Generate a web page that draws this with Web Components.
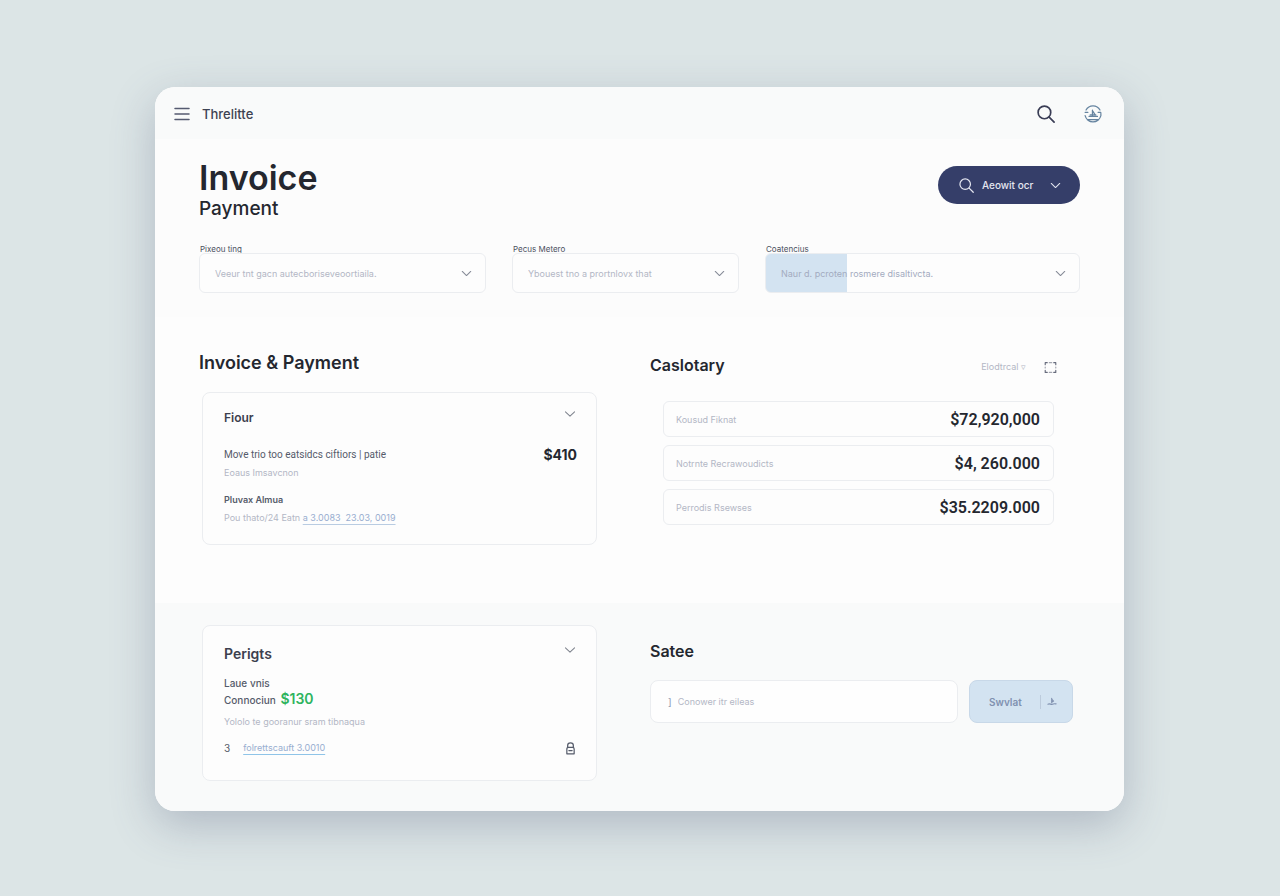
<!DOCTYPE html>
<html lang="en">
<head>
<meta charset="utf-8">
<meta name="viewport" content="width=device-width, initial-scale=1">
<title>Invoice Payment</title>
<style>
    :root {
        --ink: #24272f;
        --text: #555b6a;
        --muted: #b3b7c5;
        --line: #ebedf0;
        --surface: #fdfdfd;
        --surface-alt: #f9fafa;
        --navy: #353e69;
        --sky: #d3e3f1;
        --link: #98aed0;
        --green: #2fb45f;
        --narrow: Roboto, "Liberation Sans", sans-serif;
    }
    * { box-sizing: border-box; }
    body {
        margin: 0;
        min-height: 100vh;
        padding: 87px 156px 85px 155px;
        display: flex;
        background: #dce5e6;
        color: var(--ink);
        font-family: Inter, "Liberation Sans", sans-serif;
        font-size: 10px;
    }
</style>
</head>
<body>
<app-window>
    <top-bar slot="bar" brand="Threlitte"></top-bar>

    <page-hero heading="Invoice" sub="Payment" action="Aeowit ocr">
        <select-field label="Pixeou ting" value="Veeur tnt gacn autecboriseveoortiaila."></select-field>
        <select-field label="Pecus Metero" value="Ybouest tno a prortnlovx that"></select-field>
        <select-field label="Coatencius" value="Naur d. pcroten rosmere disaltivcta." marked></select-field>
    </page-hero>

    <split-section>
        <invoice-panel slot="left"></invoice-panel>
        <totals-panel slot="right"></totals-panel>
    </split-section>

    <split-section alt>
        <payment-panel slot="left"></payment-panel>
        <search-panel slot="right"></search-panel>
    </split-section>
</app-window>

<script>
const ICONS = {
    menu: '<path d="M1 2.500h14M1 8h14M1 13.500h14"/>',
    search: '<circle cx="6.600" cy="6.600" r="5.600"/><path d="M10.800 10.800 15.200 15.200"/>',
    chevron: '<path d="M2.800 5.500 8 10.500l5.200-5"/>',
    account: '<path d="M1.800 4.500A7 7 0 0 1 14.200 4.500M15 7.500v2M1 9.500a7.200 7.200 0 0 0 14 0M3 13h10"/><path d="M7.500 4.500v4.500M7.800 5.500l2 3M4.500 10.200h7.500M5.500 8.800h5M1 6.500h2.500M12.500 6.500h2.500"/>',
    frame: '<path d="M1.500 4.500V2H4M12 2h2.500v2.500M1.500 11.500V14H4M12 14h2.500v-2.500"/><path d="M6.500 2h3M6.500 14h3M1.500 7.500v1M14.500 7.500v1" opacity=".6"/>',
    lock: '<path d="M4.500 6.500V4.200a3.500 3 0 0 1 7 0v2.300M3.500 14.500V8.500a2 2 0 0 1 2-2h5a2 2 0 0 1 2 2v6zM6 10.500h4"/>',
    pin: '<path d="M7.500 2v7M7.500 3.500l3 3-3 2M1.500 11.500c3-1.500 5 1 7 0s3.500-1 6-.500"/>'
};

// small helper shared by all elements
function mount(el, html) {
    const root = el.attachShadow({ mode: 'open' });
    root.innerHTML = `<style>* { box-sizing: border-box; margin: 0; } button, input, select { font: inherit; color: inherit; }</style>${html}`;
    return root;
}

class AppIcon extends HTMLElement {
    connectedCallback() {
        const size = this.getAttribute('size') || 16;
        const weight = this.getAttribute('weight') || 1.5;
        mount(this, `
            <style>
                :host { display: inline-flex; flex: none; }
                svg { display: block; fill: none; stroke: currentColor; stroke-linecap: round; stroke-linejoin: round; }
            </style>
            <svg width="${size}" height="${size}" viewBox="0 0 16 16" stroke-width="${weight}" aria-hidden="true">${ICONS[this.getAttribute('name')]}</svg>
        `);
    }
}

class AppWindow extends HTMLElement {
    connectedCallback() {
        mount(this, `
            <style>
                :host {
                    flex: 1; display: flex; flex-direction: column; overflow: hidden;
                    border-radius: 20px; background: var(--surface);
                    box-shadow: 0 14px 44px rgba(85, 92, 125, .32);
                }
            </style>
            <slot name="bar"></slot>
            <slot></slot>
        `);
    }
}

class TopBar extends HTMLElement {
    connectedCallback() {
        mount(this, `
            <style>
                :host { display: block; background: var(--surface-alt); }
                header { display: flex; align-items: center; height: 52px; padding: 2px 22px 0 19px; }
                button { display: flex; padding: 0; border: 0; background: none; cursor: pointer; }
                .menu { color: #555a70; margin-right: 12px; }
                .brand { flex: 1; font-size: 13px; font-weight: 500; color: #3d4252; }
                .search { color: #3a3d55; margin-right: 29px; }
                .account { color: #6684a0; }
            </style>
            <header>
                <button class="menu" aria-label="Menu"><app-icon name="menu" size="16"></app-icon></button>
                <span class="brand">${this.getAttribute('brand')}</span>
                <button class="search" aria-label="Search"><app-icon name="search" size="18"></app-icon></button>
                <button class="account" aria-label="Account"><app-icon name="account" size="18" weight="1.1"></app-icon></button>
            </header>
        `);
    }
}

class PageHero extends HTMLElement {
    connectedCallback() {
        mount(this, `
            <style>
                :host { display: block; padding: 20px 44px 24px; background: #fcfcfc; }
                .head { display: flex; justify-content: space-between; align-items: flex-start; }
                h1 { font-size: 34px; line-height: 38px; font-weight: 600; }
                p { font-size: 19px; line-height: 24px; font-weight: 500; }
                button {
                    display: flex; align-items: center; width: 142px; height: 38px; margin-top: 7px; padding: 0 18px 0 21px;
                    border: 0; border-radius: 20px; background: var(--navy); color: #e4e6f0; cursor: pointer;
                }
                button span { flex: 1; padding-left: 8px; text-align: left; font-weight: 500; white-space: nowrap; }
                .fields { display: grid; grid-template-columns: 287fr 227fr 315fr; gap: 26px; margin-top: 24px; }
            </style>
            <div class="head">
                <div>
                    <h1>${this.getAttribute('heading')}</h1>
                    <p>${this.getAttribute('sub')}</p>
                </div>
                <button>
                    <app-icon name="search" size="15" weight="1.3"></app-icon>
                    <span>${this.getAttribute('action')}</span>
                    <app-icon name="chevron" size="13" weight="1.3"></app-icon>
                </button>
            </div>
            <div class="fields"><slot></slot></div>
        `);
    }
}

class SelectField extends HTMLElement {
    connectedCallback() {
        mount(this, `
            <style>
                :host { display: block; min-width: 0; }
                label { display: block; padding-left: 1px; font-size: 8px; line-height: 8px; color: #4b505e; }
                .box { display: grid; align-items: center; }
                select {
                    grid-area: 1 / 1; width: 100%; height: 40px; padding: 0 40px 0 15px;
                    appearance: none; border: 1px solid var(--line); border-radius: 6px;
                    background: var(--surface); color: var(--muted); font-size: 9px;
                }
                :host([marked]) select { background: linear-gradient(to right, var(--sky) 26%, var(--surface) 26%); color: #a3abc0; }
                app-icon { grid-area: 1 / 1; justify-self: end; margin-right: 13px; color: #858a96; pointer-events: none; }
            </style>
            <label for="field">${this.getAttribute('label')}</label>
            <div class="box">
                <select id="field"><option>${this.getAttribute('value')}</option></select>
                <app-icon name="chevron" size="13" weight="1.3"></app-icon>
            </div>
        `);
    }
}

class SplitSection extends HTMLElement {
    connectedCallback() {
        mount(this, `
            <style>
                :host { display: grid; grid-template-columns: 398fr 430fr; gap: 53px; padding: 34px 44px 58px; }
                :host([alt]) { flex: 1; align-items: start; padding: 22px 44px 29px; background: var(--surface-alt); }
                ::slotted(*) { min-width: 0; }
            </style>
            <slot name="left"></slot>
            <slot name="right"></slot>
        `);
    }
}

// bordered card with a title and a collapse button
class InfoCard extends HTMLElement {
    connectedCallback() {
        mount(this, `
            <style>
                :host { display: block; padding: 16px 19px 17px 21px; border: 1px solid var(--line); border-radius: 8px; background: var(--surface); }
                header { display: flex; justify-content: space-between; align-items: flex-start; }
                h3 { font-size: 12px; line-height: 18px; font-weight: 600; color: #3c404e; }
                :host([large]) { padding-top: 19px; padding-bottom: 24px; }
                :host([large]) h3 { font-size: 14px; }
                button { display: flex; margin-top: -2px; padding: 0; border: 0; background: none; color: #80858f; cursor: pointer; }
            </style>
            <header>
                <h3>${this.getAttribute('heading')}</h3>
                <button aria-label="Collapse"><app-icon name="chevron" size="14" weight="1.2"></app-icon></button>
            </header>
            <slot></slot>
        `);
    }
}

class InvoicePanel extends HTMLElement {
    connectedCallback() {
        mount(this, `
            <style>
                :host { display: block; }
                h2 { font-size: 18px; line-height: 24px; font-weight: 600; margin-bottom: 17px; }
                info-card { margin-left: 3px; }
                .row { display: flex; justify-content: space-between; margin-top: 19px; line-height: 18px; color: var(--text); }
                .row span { font-family: var(--narrow); font-size: 10px; }
                .row strong { font-size: 14px; font-weight: 700; color: var(--ink); }
                .note { font-size: 9px; line-height: 18px; color: var(--muted); }
                h4 { margin-top: 9px; font-size: 9px; line-height: 18px; font-weight: 600; color: var(--text); }
                a { color: var(--link); text-underline-offset: 3px; text-decoration-color: #b9cce2; }
            </style>
            <h2>Invoice &amp; Payment</h2>
            <info-card heading="Fiour">
                <div class="row"><span>Move trio too eatsidcs ciftiors | patie</span><strong>$410</strong></div>
                <p class="note">Eoaus Imsavcnon</p>
                <h4>Pluvax Almua</h4>
                <p class="note">Pou thato/24 Eatn <a href="#">a 3.0083&nbsp; 23.03, 0019</a></p>
            </info-card>
        `);
    }
}

class TotalsPanel extends HTMLElement {
    constructor() {
        super();
        this.totals = [
            ['Kousud Fiknat', '$72,920,000'],
            ['Notrnte Recrawoudicts', '$4, 260.000'],
            ['Perrodis Rsewses', '$35.2209.000']
        ];
    }

    connectedCallback() {
        mount(this, `
            <style>
                :host { display: block; }
                header { display: flex; padding-right: 23px; }
                h2 { flex: 1; font-size: 16px; line-height: 28px; font-weight: 600; }
                .tools { display: flex; align-items: center; gap: 18px; padding-top: 4px; }
                button { display: flex; padding: 0; border: 0; background: none; cursor: pointer; }
                .filter { font-size: 9px; line-height: 12px; color: var(--muted); }
                .expand { color: #666b7c; }
                dl { display: grid; gap: 8px; margin: 22px 26px 0 13px; }
                dl div { display: flex; align-items: center; justify-content: space-between; height: 36px; padding: 0 13px 0 12px; border: 1px solid var(--line); border-radius: 6px; }
                dt { font-size: 9px; color: var(--muted); }
                dd { font-family: var(--narrow); font-size: 16px; font-weight: 600; }
            </style>
            <header>
                <h2>Caslotary</h2>
                <div class="tools">
                    <button class="filter">Elodtrcal ▿</button>
                    <button class="expand" aria-label="Expand"><app-icon name="frame" size="13" weight="1.4"></app-icon></button>
                </div>
            </header>
            <dl>${this.totals.map(([name, sum]) => `<div><dt>${name}</dt><dd>${sum}</dd></div>`).join('')}</dl>
        `);
    }
}

class PaymentPanel extends HTMLElement {
    connectedCallback() {
        mount(this, `
            <style>
                :host { display: block; }
                info-card { margin-left: 3px; }
                .lines { margin-top: 12px; font-size: 10px; line-height: 16px; font-weight: 500; color: var(--text); }
                .lines strong { margin-left: 2px; font-size: 14px; font-weight: 600; color: var(--green); }
                .note { margin-top: 6px; font-size: 9px; line-height: 16px; color: var(--muted); }
                .foot { display: flex; align-items: center; margin-top: 10px; line-height: 16px; color: var(--text); }
                .foot p { flex: 1; margin-left: 13px; font-size: 9px; }
                a { color: var(--link); text-decoration-color: #8fc4e8; text-underline-offset: 3px; }
            </style>
            <info-card heading="Perigts" large>
                <div class="lines">
                    <p>Laue vnis</p>
                    <p>Connociun <strong>$130</strong></p>
                </div>
                <p class="note">Yololo te gooranur sram tibnaqua</p>
                <div class="foot"><span>3</span><p><a href="#">folrettscauft 3.0010</a></p><app-icon name="lock" size="13"></app-icon></div>
            </info-card>
        `);
    }
}

class SearchPanel extends HTMLElement {
    connectedCallback() {
        mount(this, `
            <style>
                :host { display: block; padding-top: 14px; }
                h2 { font-size: 16px; line-height: 24px; font-weight: 600; }
                form { display: flex; gap: 11px; margin-top: 17px; padding-right: 7px; }
                .box { flex: 1; display: flex; align-items: center; height: 43px; padding: 0 17px; border: 1px solid var(--line); border-radius: 8px; background: #fefefe; color: #8d98b0; }
                input { flex: 1; min-width: 0; margin-left: 6px; padding: 0; border: 0; outline: 0; background: none; font-size: 9px; }
                input::placeholder { color: var(--muted); opacity: 1; }
                button { display: flex; align-items: center; width: 104px; height: 43px; padding: 0 15px 0 19px; border: 1px solid #c8d8e8; border-radius: 8px; background: var(--sky); color: #8091b0; font-weight: 600; cursor: pointer; }
                button span { flex: 1; text-align: left; }
                button i { width: 1px; height: 14px; margin-right: 6px; background: #bccbdc; }
            </style>
            <h2>Satee</h2>
            <form onsubmit="return false">
                <label class="box">]<input type="text" placeholder="Conower itr eileas" aria-label="Conower itr eileas"></label>
                <button><span>Swvlat</span><i></i><app-icon name="pin" size="10" weight="1.8"></app-icon></button>
            </form>
        `);
    }
}

customElements.define('app-icon', AppIcon);
customElements.define('app-window', AppWindow);
customElements.define('top-bar', TopBar);
customElements.define('page-hero', PageHero);
customElements.define('select-field', SelectField);
customElements.define('split-section', SplitSection);
customElements.define('info-card', InfoCard);
customElements.define('invoice-panel', InvoicePanel);
customElements.define('totals-panel', TotalsPanel);
customElements.define('payment-panel', PaymentPanel);
customElements.define('search-panel', SearchPanel);
</script>
</body>
</html>
